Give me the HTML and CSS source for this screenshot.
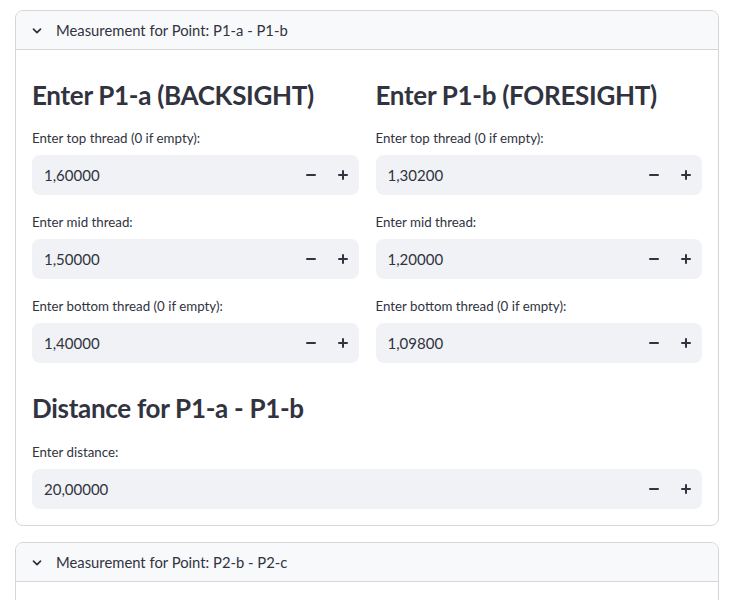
FILE: index.html
```html
<!DOCTYPE html>
<html>
<head>
<meta charset="utf-8">
<link rel="stylesheet" href="styles.css">
</head>
<body>
<div class="page">
  <section class="expander">
    <div class="exp-header">
      <svg class="chev" width="12" height="12" viewBox="0 0 12 12"><path d="M2.5 4.2 L6 7.7 L9.5 4.2" fill="none" stroke="#31333f" stroke-width="1.7" stroke-linecap="round" stroke-linejoin="round"/></svg>
      <span>Measurement for Point: P1-a - P1-b</span>
    </div>
    <div class="exp-body">
      <div class="cols">
        <div class="col">
          <h3>Enter P1-a (BACKSIGHT)</h3>
          <div class="field">
            <label>Enter top thread (0 if empty):</label>
            <div class="num"><span class="val">1,60000</span><span class="btn minus"></span><span class="btn plus"></span></div>
          </div>
          <div class="field">
            <label>Enter mid thread:</label>
            <div class="num"><span class="val">1,50000</span><span class="btn minus"></span><span class="btn plus"></span></div>
          </div>
          <div class="field">
            <label>Enter bottom thread (0 if empty):</label>
            <div class="num"><span class="val">1,40000</span><span class="btn minus"></span><span class="btn plus"></span></div>
          </div>
        </div>
        <div class="col">
          <h3>Enter P1-b (FORESIGHT)</h3>
          <div class="field">
            <label>Enter top thread (0 if empty):</label>
            <div class="num"><span class="val">1,30200</span><span class="btn minus"></span><span class="btn plus"></span></div>
          </div>
          <div class="field">
            <label>Enter mid thread:</label>
            <div class="num"><span class="val">1,20000</span><span class="btn minus"></span><span class="btn plus"></span></div>
          </div>
          <div class="field">
            <label>Enter bottom thread (0 if empty):</label>
            <div class="num"><span class="val">1,09800</span><span class="btn minus"></span><span class="btn plus"></span></div>
          </div>
        </div>
      </div>
      <h3 class="dist">Distance for P1-a - P1-b</h3>
      <div class="field dist-field">
        <label>Enter distance:</label>
        <div class="num"><span class="val">20,00000</span><span class="btn minus"></span><span class="btn plus"></span></div>
      </div>
    </div>
  </section>
  <section class="expander second">
    <div class="exp-header">
      <svg class="chev" width="12" height="12" viewBox="0 0 12 12"><path d="M2.5 4.2 L6 7.7 L9.5 4.2" fill="none" stroke="#31333f" stroke-width="1.7" stroke-linecap="round" stroke-linejoin="round"/></svg>
      <span>Measurement for Point: P2-b - P2-c</span>
    </div>
    <div class="exp-body"></div>
  </section>
</div>
</body>
</html>
```
FILE: styles.css
```css
* { box-sizing: border-box; }
html, body { margin: 0; padding: 0; background: #fff; }
body {
  font-family: Lato, "Liberation Sans", sans-serif;
  color: #31333f;
  overflow: hidden;
}
.page {
  padding: 10px 0 0 15px;
  width: 719px;
}
.expander {
  border: 1px solid #d5d6da;
  border-radius: 8px;
  overflow: hidden;
}
.expander.second {
  margin-top: 16px;
  height: 80px;
}
.exp-header {
  height: 39px;
  background: #f8f9fb;
  border-bottom: 1px solid #d5d6da;
  display: flex;
  align-items: center;
  padding-left: 15px;
  font-size: 14.8px;
  gap: 13px;
}
.chev { display: block; margin-top: 1px; }
.exp-body {
  padding: 28px 16px 16px 16px;
}
.cols {
  display: grid;
  grid-template-columns: 1fr 1fr;
  column-gap: 17px;
}
h3 {
  margin: 0;
  font-size: 26px;
  line-height: 34px;
  font-weight: 700;
  letter-spacing: -0.3px;
  height: 34px;
}
.field { margin-top: 16px; }
.col .field + .field { margin-top: 17px; }
.dist { margin-top: 28px; }
.dist-field { margin-top: 17px; }
label {
  display: block;
  font-size: 13.3px;
  line-height: 20px;
  height: 20px;
}
.num {
  margin-top: 7px;
  height: 40px;
  background: #f0f2f6;
  border-radius: 8px;
  display: flex;
  align-items: center;
  padding-left: 12px;
}
.val {
  flex: 1;
  font-size: 15px;
}
.btn {
  width: 32px;
  height: 40px;
  position: relative;
}
.btn::before, .plus::after {
  content: "";
  position: absolute;
  left: 11px;
  top: 19px;
  width: 10px;
  height: 2px;
  background: #31333f;
  border-radius: 1px;
}
.plus::after {
  left: 15px;
  top: 15px;
  width: 2px;
  height: 10px;
}
```
